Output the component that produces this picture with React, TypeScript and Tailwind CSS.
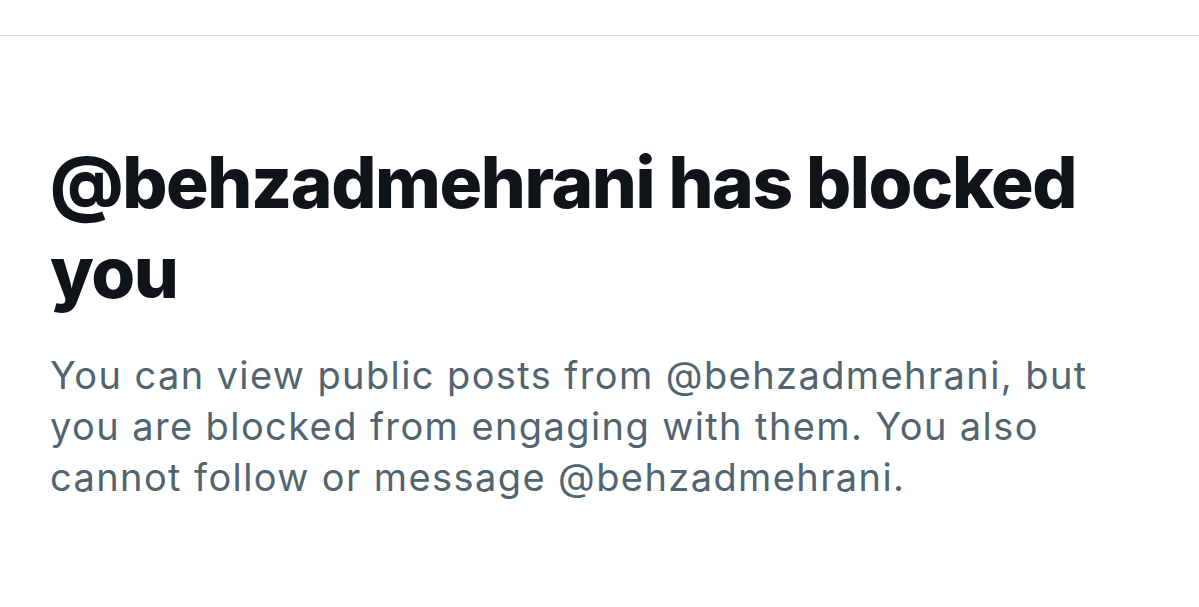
export default function App() {
  return (
    <div className="min-h-[607px] w-[1199px] bg-white" style={{ fontFamily: 'Inter, "Liberation Sans", sans-serif' }}>
      <div className="h-[36px] border-b border-[#dcdcdc]" />
      <div className="px-[50px] pt-[101px]">
        <h1 className="text-[71px] font-extrabold leading-[90px] tracking-[-1.4px] text-[#0f1419]">
          @behzadmehrani has blocked you
        </h1>
        <p className="mt-[33px] w-[1100px] text-[38px] leading-[51px] tracking-[1.4px] text-[#536471]">
          You can view public posts from @behzadmehrani, but you are blocked from engaging with them. You also cannot follow or message @behzadmehrani.
        </p>
      </div>
    </div>
  );
}
